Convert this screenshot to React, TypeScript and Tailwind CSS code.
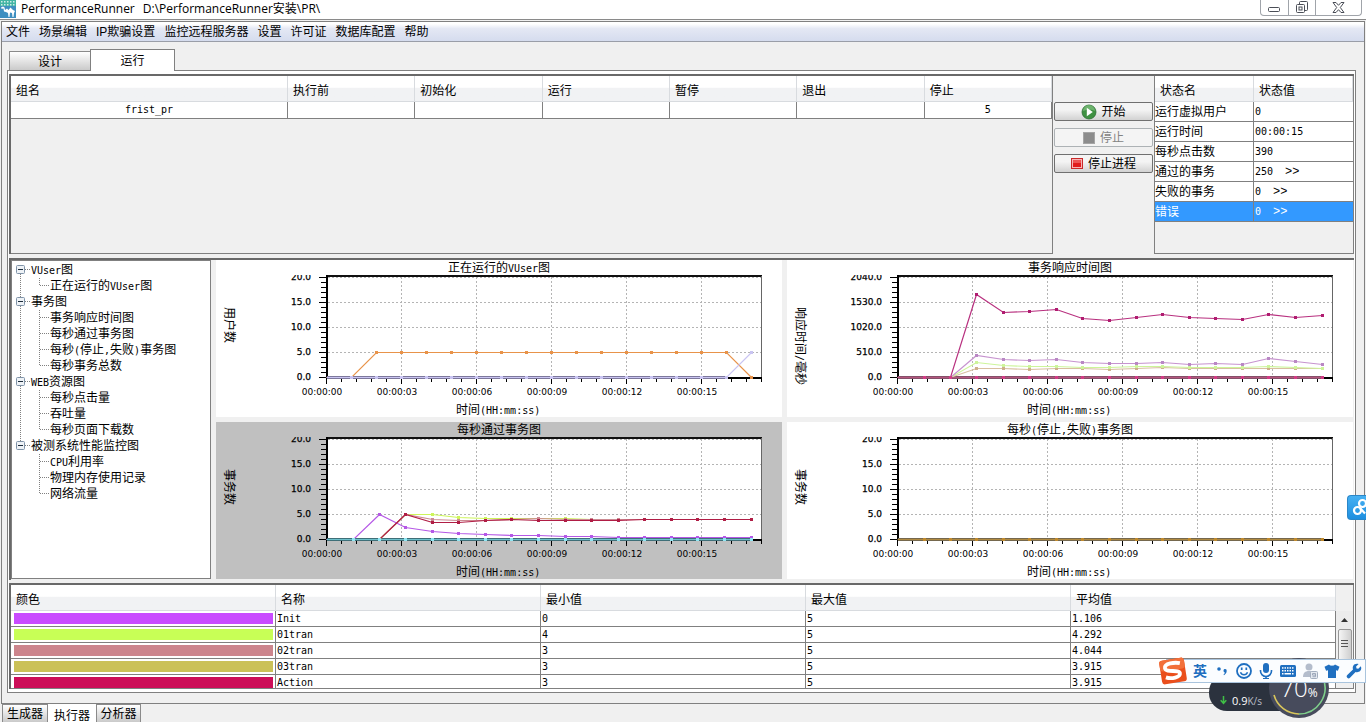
import React from "react";

const CJK = "font-['Liberation_Sans','Noto_Sans_CJK_SC',sans-serif]";

/* Latin runs inside Chinese labels are set in a narrow monospaced face. */
function splitRuns(text: string) {
  return text.split(/([\x20-\x7e]+)/).filter(Boolean);
}
const isLatin = (s: string) => /^[\x20-\x7e]+$/.test(s);

function Mixed({ text }: { text: string }) {
  return (
    <>
      {splitRuns(text).map((run, i) =>
        isLatin(run) ? (
          <span key={i} className="font-['DejaVu_Sans_Mono',monospace] text-[10px]">
            {run}
          </span>
        ) : (
          run
        ),
      )}
    </>
  );
}

function SvgMixed({ text }: { text: string }) {
  return (
    <>
      {splitRuns(text).map((run, i) =>
        isLatin(run) ? (
          <tspan key={i} className="font-['DejaVu_Sans_Mono',monospace] text-[10px]">
            {run}
          </tspan>
        ) : (
          <tspan key={i}>{run}</tspan>
        ),
      )}
    </>
  );
}

/* ---------- charts ---------- */

type Series = { color: string; dot?: string; xs: number[]; ys: number[] };

const ORIGIN_X = 110;
const ZERO_Y = 117;
const seconds = Array.from({ length: 18 }, (_, i) => ORIGIN_X + i * 25);
const samples = [
  110, 137, 163, 189, 216, 242, 269, 295, 322, 349, 375, 402, 428, 455, 481, 508, 535,
];
const flat = (n: number) => Array.from({ length: n }, () => ZERO_Y);

const userSeries: Series[] = [
  { color: "#e8934a", xs: seconds, ys: [117, 117, ...Array.from({ length: 15 }, () => 92), 117] },
  { color: "#c9c4f2", xs: seconds, ys: [...flat(17), 92] },
];
const responseSeries: Series[] = [
  { color: "#d8bfa0", dot: "#cdb08c", xs: samples, ys: [117, 117, 117, 108, 108, 109, 108, 108, 109, 108, 107, 108, 108, 108, 108, 108, 108] },
  { color: "#cdf59a", xs: samples, ys: [117, 117, 117, 102, 105, 106, 106, 107, 107, 106, 106, 107, 107, 107, 106, 107, 108] },
  { color: "#c793cf", dot: "#b987c4", xs: samples, ys: [117, 117, 117, 95, 99, 100, 99, 102, 103, 103, 102, 104, 103, 104, 98, 101, 104] },
  { color: "#b8307f", dot: "#b01c70", xs: samples, ys: [117, 117, 117, 34, 52, 51, 49, 58, 60, 57, 54, 57, 58, 59, 54, 57, 55] },
  { color: "#b5557d", dot: "#d23c86", xs: samples, ys: flat(17) },
];
const passedSeries: Series[] = [
  { color: "#cdf55a", xs: samples, ys: [117, 117, 117, 92, 92, 95, 96, 96, 96, 96, 97, 97, 97, 97, 97, 97, 97] },
  { color: "#cc8a92", xs: samples, ys: [117, 117, 117, 92, 97, 98, 98, 97, 96, 97, 97, 97, 97, 97, 97, 97, 97] },
  { color: "#b558e6", xs: samples, ys: [117, 117, 92, 105, 109, 111, 112, 113, 113, 114, 114, 115, 115, 115, 115, 115, 115] },
  { color: "#b01d45", xs: samples, ys: [117, 117, 117, 92, 100, 100, 98, 97, 98, 98, 98, 98, 97, 97, 97, 97, 97] },
  { color: "#6cc0cb", dot: "#8fe6f2", xs: samples, ys: flat(17) },
];
const failedSeries: Series[] = [
  { color: "#b08a40", dot: "#c08a2e", xs: samples, ys: flat(17) },
];

type ChartProps = {
  title: string;
  yTitle: string;
  yLabels: string[];
  series: Series[];
  baseline: { color: string; end: number };
  selected?: boolean;
  clipId: string;
};

function Chart({ title, yTitle, yLabels, series, baseline, selected, clipId }: ChartProps) {
  return (
    <section className={selected ? "bg-[#c0c0c0]" : "bg-white"}>
      <svg
        viewBox="0 0 566 157"
        preserveAspectRatio="xMinYMin meet"
        className="block h-[157px] w-full"
        role="img"
        aria-label={title}
      >
        <defs>
          <clipPath id={clipId}>
            <rect x="0" y="15" width="109" height="120" />
          </clipPath>
        </defs>
        <text x="283" y="12" textAnchor="middle" className={`${CJK} text-[12px]`}>
          <SvgMixed text={title} />
        </text>
        <text transform="translate(9 47) rotate(90)" className={`${CJK} text-[12px]`}>
          <SvgMixed text={yTitle} />
        </text>
        <rect x="110" y="16" width="435" height="101" fill="#fff" />
        <g stroke="#b4b4b4" strokeWidth="1" strokeDasharray="2 2">
          {[17, 42, 67, 92].map((y) => (
            <line key={y} x1="112" x2="545" y1={y + 0.5} y2={y + 0.5} />
          ))}
          {[185, 260, 335, 410, 485].map((x) => (
            <line key={x} x1={x + 0.5} x2={x + 0.5} y1="17" y2="117" />
          ))}
        </g>
        <rect x="110" y="15" width="436" height="2" fill="#111" />
        <rect x="545" y="16" width="1" height="102" fill="#666" />
        <rect x="110" y="117" width="436" height="2" fill="#000" />
        <rect x="110" y="15" width="2" height="104" fill="#000" />
        {Array.from({ length: 21 }, (_, i) => (
          <rect
            key={i}
            x={i % 5 === 0 ? 103 : 105}
            y={17 + i * 5}
            width={i % 5 === 0 ? 7 : 5}
            height="1"
          />
        ))}
        {Array.from({ length: 30 }, (_, i) => (
          <rect key={i} x={110 + i * 15} y="118" width="1" height={i % 5 === 0 ? 6 : 4} />
        ))}
        <g clipPath={`url(#${clipId})`} className="font-['DejaVu_Sans',sans-serif] text-[9px]" stroke="#000" strokeWidth="0.25">
          {yLabels.map((label, i) => (
            <text key={label} x="95" y={20 + i * 25} textAnchor="end">
              {label}
            </text>
          ))}
        </g>
        <g className="font-['DejaVu_Sans',sans-serif] text-[9px]">
          {["00", "03", "06", "09", "12", "15"].map((s, i) => (
            <text key={s} x={106 + i * 75} y="135" textAnchor="middle">
              {`00:00:${s}`}
            </text>
          ))}
        </g>
        <rect x="111" y="116" width={baseline.end - 111} height="3" fill={baseline.color} />
        {series.map((s, i) => (
          <g key={i}>
            <polyline
              fill="none"
              stroke={s.color}
              strokeWidth="1.2"
              points={s.xs.map((x, j) => `${x + 0.5},${s.ys[j] + 0.5}`).join(" ")}
            />
            {s.xs.slice(1).map((x, j) => (
              <rect key={j} x={x - 1} y={s.ys[j + 1] - 1} width="3" height="3" fill={s.dot ?? s.color} />
            ))}
          </g>
        ))}
        <text x="240" y="154" className={`${CJK} text-[12px]`}>
          <SvgMixed text="时间(HH:mm:ss)" />
        </text>
      </svg>
    </section>
  );
}

/* ---------- tree ---------- */

const tree = [
  { label: "VUser图", children: ["正在运行的VUser图"] },
  {
    label: "事务图",
    children: ["事务响应时间图", "每秒通过事务图", "每秒(停止,失败)事务图", "每秒事务总数"],
  },
  { label: "WEB资源图", children: ["每秒点击量", "吞吐量", "每秒页面下载数"] },
  { label: "被测系统性能监控图", children: ["CPU利用率", "物理内存使用记录", "网络流量"] },
];

function RootGuide({ first, last }: { first: boolean; last: boolean }) {
  return (
    <svg width="19" height="16" viewBox="0 0 19 16" className="block">
      <g stroke="#808080" strokeDasharray="1 1">
        {!first && <line x1="8.5" x2="8.5" y1="0" y2="4" />}
        {!last && <line x1="8.5" x2="8.5" y1="12" y2="16" />}
        <line x1="13" x2="18" y1="7.5" y2="7.5" />
      </g>
      <rect x="4.5" y="3.5" width="8" height="8" rx="1" fill="#eef2f6" stroke="#7f93a8" />
      <rect x="6" y="7" width="5" height="1" fill="#1b2b3b" />
    </svg>
  );
}

function LeafGuide({ last, rootLast }: { last: boolean; rootLast: boolean }) {
  return (
    <svg width="38" height="16" viewBox="0 0 38 16" className="block shrink-0">
      <g stroke="#808080" strokeDasharray="1 1">
        {!rootLast && <line x1="8.5" x2="8.5" y1="0" y2="16" />}
        <line x1="27.5" x2="27.5" y1="0" y2={last ? 8 : 16} />
        <line x1="28" x2="37" y1="7.5" y2="7.5" />
      </g>
    </svg>
  );
}

function GraphTree() {
  return (
    <ul className="h-[319px] w-[200px] shrink-0 border border-[#808080] bg-white pt-px leading-4 whitespace-nowrap">
      {tree.map((node, i) => {
        const rootLast = i === tree.length - 1;
        return (
          <li key={node.label}>
            <div className="flex h-4 items-center">
              <button type="button" aria-label={`折叠 ${node.label}`}>
                <RootGuide first={i === 0} last={rootLast} />
              </button>
              <span>
                <Mixed text={node.label} />
              </span>
            </div>
            <ul>
              {node.children.map((child, j) => (
                <li key={child} className="flex h-4 items-center">
                  <LeafGuide last={j === node.children.length - 1} rootLast={rootLast} />
                  <span>
                    <Mixed text={child} />
                  </span>
                </li>
              ))}
            </ul>
          </li>
        );
      })}
    </ul>
  );
}

/* ---------- tables ---------- */

const TH =
  "h-[26px] border-r border-b border-[#d8dbdf] bg-linear-to-b from-white from-45% to-[#f1f2f4] to-50% p-0 pt-1 pl-[5px] text-left font-normal leading-4";

function GroupTable() {
  const heads = ["组名", "执行前", "初始化", "运行", "暂停", "退出", "停止"];
  const row = ["frist_pr", "", "", "", "", "", "5"];
  return (
    <div className="min-w-0 flex-1 border-r border-b border-[#808080]">
      <table className="w-full table-fixed border-separate border-spacing-0">
        <colgroup>
          <col className="w-[277px]" />
          <col span={6} />
        </colgroup>
        <thead>
          <tr>
            {heads.map((h) => (
              <th key={h} scope="col" className={TH}>
                {h}
              </th>
            ))}
          </tr>
        </thead>
        <tbody>
          <tr>
            {row.map((c, i) => (
              <td
                key={i}
                className="h-4 border-r border-b border-[#808080] bg-white p-0 text-center font-['DejaVu_Sans_Mono',monospace] text-[10px] leading-4"
              >
                {c}
              </td>
            ))}
          </tr>
        </tbody>
      </table>
    </div>
  );
}

const statusRows = [
  { name: "运行虚拟用户", value: "0" },
  { name: "运行时间", value: "00:00:15" },
  { name: "每秒点击数", value: "390" },
  { name: "通过的事务", value: "250", more: true },
  { name: "失败的事务", value: "0", more: true },
  { name: "错误", value: "0", more: true, active: true },
];

function StatusTable() {
  return (
    <div className="w-[200px] shrink-0 border-r border-b border-l border-[#808080]">
      <table className="w-full table-fixed border-separate border-spacing-0">
        <thead>
          <tr>
            <th scope="col" className={TH}>状态名</th>
            <th scope="col" className={TH}>状态值</th>
          </tr>
        </thead>
        <tbody>
          {statusRows.map((r) => (
            <tr key={r.name} className={r.active ? "bg-[#3399ff] text-white" : "bg-white"}>
              <td className="h-5 border-r border-b border-[#808080] p-0 leading-4">{r.name}</td>
              <td className="h-5 border-b border-[#808080] p-0 pl-px leading-4">
                <span className="flex items-center gap-3">
                  <span className="font-['DejaVu_Sans_Mono',monospace] text-[10px]">{r.value}</span>
                  {r.more && (
                    <a href="#" aria-label={`${r.name}详情`} className="font-['Liberation_Mono',monospace] text-[12px]">
                      &gt;&gt;
                    </a>
                  )}
                </span>
              </td>
            </tr>
          ))}
        </tbody>
      </table>
    </div>
  );
}

const legendRows = [
  { color: "bg-[#c94bff]", cells: ["Init", "0", "5", "1.106"] },
  { color: "bg-[#c8ff56]", cells: ["01tran", "4", "5", "4.292"] },
  { color: "bg-[#cc858d]", cells: ["02tran", "3", "5", "4.044"] },
  { color: "bg-[#cbc158]", cells: ["03tran", "3", "5", "3.915"] },
  { color: "bg-[#cc0e58]", cells: ["Action", "3", "5", "3.915"] },
];

function LegendTable() {
  return (
    <div className="flex h-[104px] overflow-hidden border-r border-b border-[#808080]">
      <div className="min-w-0 flex-1">
        <table className="w-full table-fixed border-separate border-spacing-0 bg-white">
          <thead>
            <tr>
              {["颜色", "名称", "最小值", "最大值", "平均值"].map((h) => (
                <th key={h} scope="col" className={TH}>
                  {h}
                </th>
              ))}
            </tr>
          </thead>
          <tbody>
            {legendRows.map((r) => (
              <tr key={r.cells[0]}>
                <td className="h-4 border-r border-b border-[#808080] p-0 pr-0.5 pl-[3px]">
                  <div className={`h-[11px] ${r.color}`} />
                </td>
                {r.cells.map((c, i) => (
                  <td
                    key={i}
                    className="h-4 border-r border-b border-[#808080] p-0 pl-px font-['DejaVu_Sans_Mono',monospace] text-[10px] leading-[15px]"
                  >
                    {c}
                  </td>
                ))}
              </tr>
            ))}
          </tbody>
        </table>
      </div>
      <div className="flex w-[17px] shrink-0 flex-col items-center bg-[#f0f0f0] pt-[26px]">
        <button type="button" aria-label="向上滚动" className="flex h-[18px] w-full items-center justify-center bg-[#ececec]">
          <svg width="7" height="4" viewBox="0 0 7 4">
            <path d="M3.5 0 7 4H0z" fill="#333" />
          </svg>
        </button>
        <div className="flex h-[34px] w-[14px] flex-col items-center gap-[2px] rounded-xs border border-[#979797] bg-linear-to-r from-[#f5f5f5] to-[#cfcfcf] pt-[10px]">
          <i className="h-px w-[7px] bg-[#555]" />
          <i className="h-px w-[7px] bg-[#555]" />
          <i className="h-px w-[7px] bg-[#555]" />
        </div>
      </div>
    </div>
  );
}

/* ---------- run controls ---------- */

const BTN =
  "flex h-[19px] w-full items-center justify-center gap-1 rounded-xs border leading-4 whitespace-nowrap";

function RunButtons() {
  return (
    <div className="flex w-[101px] shrink-0 flex-col gap-[7px] px-px pt-[26px]">
      <button type="button" className={`${BTN} border-[#707070] bg-linear-to-b from-[#f4f4f4] from-40% to-[#d2d2d2]`}>
        <svg width="16" height="16" viewBox="0 0 16 16">
          <circle cx="8" cy="8" r="7" fill="#3f9142" stroke="#2c6f33" strokeWidth="0.8" />
          <path d="M2 7a6 6 0 0 1 12 0c-3-2-8-1.500-12 0z" fill="#8cc98a" opacity="0.6" />
          <path d="M5.800 3.800 11.800 8l-6 4.200z" fill="#fff" />
        </svg>
        开始
      </button>
      <button type="button" disabled className={`${BTN} border-[#adb2b5] bg-[#f4f4f4] text-[#838383]`}>
        <svg width="13" height="12" viewBox="0 0 13 12">
          <rect x="0.5" y="0.5" width="11" height="11" fill="#8c8c8c" stroke="#a5a5a5" />
        </svg>
        停止
      </button>
      <button type="button" className={`${BTN} border-[#707070] bg-linear-to-b from-[#f4f4f4] from-40% to-[#d2d2d2]`}>
        <svg width="13" height="12" viewBox="0 0 13 12">
          <rect x="0.5" y="0.5" width="11" height="10" fill="#f7b5b5" stroke="#c92a2a" />
          <rect x="2" y="2" width="8" height="7" fill="#e21b1b" />
          <rect x="2" y="2" width="8" height="3" fill="#ee5555" />
        </svg>
        停止进程
      </button>
    </div>
  );
}

/* ---------- chrome ---------- */

function TitleBar() {
  return (
    <header className="flex h-5 items-start border-b border-[#8a8a8a] bg-white">
      <svg width="16" height="18" viewBox="0 0 16 18" className="shrink-0">
        <rect width="16" height="18" fill="#3f8fc0" />
        <rect width="16" height="6" fill="#43b5a4" />
        <g fill="#fff" opacity="0.75">
          {[1, 4, 7, 10, 13].map((x) => (
            <rect key={x} x={x} y="1" width="1.500" height="1.500" />
          ))}
          {[1, 4, 7, 10, 13].map((x) => (
            <rect key={x} x={x} y="4" width="1.500" height="1.500" />
          ))}
        </g>
        <path
          d="M1 7.500 3 6.500 4.500 7.500 5 10 7 8.500 8.500 10 10.500 7.500 13 10 15 11 14 13 13.500 17 12.500 17 12 13 10 12.500 9.500 17 8.500 17 8 13 6 12 4 11.500 3.500 8.500 1.500 8.800z"
          fill="#fff"
        />
      </svg>
      <h1 className="flex flex-1 gap-2 pl-[5px] font-['Open_Sans','Noto_Sans_CJK_SC',sans-serif] text-[12px] leading-[18px] font-normal whitespace-nowrap">
        <span>PerformanceRunner</span>
        <span>{"D:\\PerformanceRunner安装\\PR\\"}</span>
      </h1>
      <div className="mr-1 flex h-4 overflow-hidden rounded-b border border-t-0 border-[#a0a4aa] bg-white">
        <button type="button" aria-label="最小化" className="flex w-[27px] items-center justify-center">
          <svg width="13" height="14" viewBox="0 0 13 14">
            <rect x="0.5" y="6.500" width="11" height="4" rx="1" fill="#fff" stroke="#4a4e57" />
          </svg>
        </button>
        <button type="button" aria-label="还原" className="flex w-[27px] items-center justify-center border-l border-[#a0a4aa]">
          <svg width="13" height="14" viewBox="0 0 13 14" fill="#fff" stroke="#4a4e57">
            <rect x="3.500" y="0.5" width="8" height="9" rx="1" />
            <rect x="0.5" y="3.500" width="8" height="8" rx="1" />
            <rect x="3" y="6" width="3" height="3" />
          </svg>
        </button>
        <button type="button" aria-label="关闭" className="flex w-[46px] items-center justify-center border-l border-[#a0a4aa]">
          <svg width="13" height="13" viewBox="0 0 13 13">
            <path
              d="M1 1.500h3l2.500 2.800L9 1.500h3L8.300 6.500l3.700 5H9L6.500 8.700 4 11.500H1l3.700-5z"
              fill="#fff"
              stroke="#4a4e57"
            />
          </svg>
        </button>
      </div>
    </header>
  );
}

function MenuBar() {
  const items = ["文件", "场景编辑", "IP欺骗设置", "监控远程服务器", "设置", "许可证", "数据库配置", "帮助"];
  return (
    <nav className="flex h-5 items-center gap-[9px] border-b border-[#9a9ea8] bg-linear-to-b from-white from-10% via-[#e4e8f4] via-35% to-[#d5dcee] pl-1 leading-[18px]">
      {items.map((m) => (
        <button key={m} type="button" className="whitespace-nowrap">
          {m}
        </button>
      ))}
    </nav>
  );
}

/* ---------- floating desktop widgets ---------- */

const SLOT = "flex w-[22px] items-center justify-center";

function InputMethodBar() {
  return (
    <div className="absolute top-[659px] right-0 flex h-6 items-stretch border border-[#a9c4dd] bg-[#fbfdff] pl-[22px] text-[#1f6fc0]">
      <svg width="30" height="30" viewBox="0 0 30 30" className="absolute -top-1 -left-[9px]">
        <g transform="rotate(-9 15 15)">
          <rect x="2.500" y="3" width="25" height="24" rx="3" fill="#ea4f1c" />
          <rect x="2.500" y="3" width="25" height="11" rx="3" fill="#f2703a" />
          <path
            d="M23 8.300C18 6.500 7.500 6 7.500 11c0 5 14 3 14 7.200 0 4.500-9.500 4.600-14.500 2"
            fill="none"
            stroke="#fff"
            strokeWidth="3.800"
          />
        </g>
      </svg>
      <span className={`${SLOT} text-[14px] font-bold`}>英</span>
      <span className={SLOT}>
        <svg width="14" height="14" viewBox="0 0 14 14" fill="currentColor">
          <circle cx="4" cy="5" r="1.800" />
          <path d="M8.500 6.500a1.600 1.600 0 0 1 3.200.3c0 2-1 3.500-2.700 4.400l-.5-.8c.9-.6 1.300-1.200 1.300-2-.8 0-1.400-.8-1.300-1.900z" />
        </svg>
      </span>
      <span className={SLOT}>
        <svg width="18" height="18" viewBox="0 0 18 18" fill="none" stroke="currentColor">
          <circle cx="9" cy="9" r="7" strokeWidth="1.800" />
          <path d="M5.500 10.200a3.700 3.700 0 0 0 7 0" strokeWidth="1.500" />
          <path d="M6.700 5.500v2.500M11.300 5.500v2.500" strokeWidth="1.700" />
        </svg>
      </span>
      <span className={SLOT}>
        <svg width="16" height="18" viewBox="0 0 16 18" fill="currentColor">
          <rect x="5" y="1" width="6" height="10" rx="3" />
          <path d="M2.500 8v1a5.500 5.500 0 0 0 11 0V8" fill="none" stroke="currentColor" strokeWidth="1.600" />
          <path d="M7.200 14h1.600v2H11v1H5v-1h2.200z" />
        </svg>
      </span>
      <span className={SLOT}>
        <svg width="18" height="14" viewBox="0 0 18 14">
          <rect x="1" y="1" width="16" height="12" rx="1.500" fill="currentColor" />
          <g fill="#fff">
            {[3, 5.5, 8, 10.5, 13].map((x) => (
              <rect key={x} x={x} y="3.200" width="1.500" height="1.500" />
            ))}
            {[3, 5.5, 8, 10.5, 13].map((x) => (
              <rect key={x} x={x} y="6" width="1.500" height="1.500" />
            ))}
            <rect x="3" y="9" width="1.500" height="1.500" />
            <rect x="5.500" y="9" width="6.500" height="1.500" />
            <rect x="13" y="9" width="1.500" height="1.500" />
          </g>
        </svg>
      </span>
      <span className={SLOT}>
        <svg width="18" height="18" viewBox="0 0 18 18">
          <circle cx="8" cy="5" r="3.500" fill="#b4bdcc" />
          <path d="M2 15c0-4 2-6 6-6s5 2 5 6z" fill="#b4bdcc" />
          <rect x="9.500" y="9.500" width="7" height="7" rx="1" fill="#e4e9f0" stroke="#a3aebf" />
          <path d="M11.500 11.500h3v3.200h-3M11.500 11.500v1.600h3" fill="none" stroke="#8d99ad" strokeWidth="0.8" />
        </svg>
      </span>
      <span className={SLOT}>
        <svg width="16" height="16" viewBox="0 0 16 16" fill="currentColor">
          <path d="M5 1.500c1 1.600 5 1.600 6 0l4.500 2.300-1.600 4-1.900-.6V15H4V7.200l-1.900.6-1.600-4z" />
        </svg>
      </span>
      <span className={SLOT}>
        <svg width="16" height="16" viewBox="0 0 16 16" fill="currentColor">
          <path d="M14.800 3.300 12.300 5.800 10.500 5.400 10.100 3.600 12.600 1.100C10.500.4 8.300 1 7.300 2.800 6.600 4 6.600 5.200 7 6.400L1.300 12a1.900 1.900 0 0 0 2.700 2.700L9.600 9c1.600.6 3.400.2 4.500-.9 1.300-1.300 1.500-3.200.7-4.800z" />
        </svg>
      </span>
    </div>
  );
}

function SpeedBall() {
  return (
    <div className="absolute top-[658px] right-[37px] h-[62px] w-[120px] text-white">
      <div className="absolute top-[16px] left-0 flex h-[37px] w-[100px] items-end rounded-[18px] bg-[#2b323e] pb-[2px] pl-[11px]">
        <svg width="7" height="9" viewBox="0 0 7 9" className="mb-[4px]">
          <path d="M3.500 0v7M0.7 4.300 3.500 7.300 6.300 4.300" fill="none" stroke="#3fbf46" strokeWidth="1.500" />
        </svg>
        <span className="pl-[5px] font-['Open_Sans',sans-serif] text-[11px] leading-4">0.9</span>
        <span className="font-['Open_Sans',sans-serif] text-[10px] leading-4 text-[#b9bec8]">K/s</span>
      </div>
      <div className="absolute top-0 right-0 flex h-[60px] w-[60px] items-center justify-center rounded-full bg-[#474b5c]">
        <svg width="60" height="60" viewBox="0 0 60 60" className="absolute inset-0">
          <path d="M5 37a26 26 0 0 0 25 19" fill="none" stroke="#d9c65b" strokeWidth="1.600" />
          <path d="M30 56a26 26 0 0 0 24-36" fill="none" stroke="#7fcf8b" strokeWidth="1.600" />
        </svg>
        <span className="relative pt-1 font-['Open_Sans',sans-serif] text-[24px] leading-6 font-light">
          70<span className="text-[12px] font-normal">%</span>
        </span>
      </div>
    </div>
  );
}

function SideBadge() {
  return (
    <button
      type="button"
      aria-label="分享"
      className="absolute top-[495px] right-0 h-[25px] w-[19px] overflow-hidden rounded-l-sm border border-r-0 border-[#2a86c8] bg-linear-to-b from-[#45b0f2] to-[#1d8fe0]"
    >
      <svg width="18" height="23" viewBox="0 0 18 23" fill="none" stroke="#fff" strokeWidth="2.200">
        <circle cx="9.500" cy="14.500" r="3.500" />
        <circle cx="14.500" cy="7.500" r="3.500" />
        <path d="M12 12l5 5.500" />
      </svg>
    </button>
  );
}

/* ---------- page ---------- */

const TAB_OFF = "border border-b-0 border-[#8a8a8a] bg-linear-to-b from-white to-[#cacaca]";

export default function App() {
  const twenty = ["20.0", "15.0", "10.0", "5.0", "0.0"];
  return (
    <div className={`relative min-h-screen overflow-hidden bg-[#f0f0f0] text-[12px] text-black ${CJK}`}>
      <TitleBar />
      <div className="mx-px mt-px border border-[#808080]">
        <MenuBar />
        <main className="pt-[7px] pr-2 pb-[10px] pl-[5px]">
          <div role="tablist" className="flex h-[21px] items-end pl-0.5 leading-4">
            <button type="button" role="tab" aria-selected="false" className={`h-[19px] w-[81px] border-r-0 pt-0.5 ${TAB_OFF}`}>
              设计
            </button>
            <button
              type="button"
              role="tab"
              aria-selected="true"
              className="z-10 -mb-px h-[22px] w-[85px] border border-b-0 border-[#808080] bg-white"
            >
              运行
            </button>
          </div>
          <div className="border border-[#808080] bg-white px-px py-[3px]">
            <div className="bg-[#f0f0f0]">
              <section className="flex h-[180px] border-t-2 border-l-2 border-[#696969]">
                <GroupTable />
                <RunButtons />
                <StatusTable />
              </section>
              <section className="mt-1 flex gap-[5px] border-t-2 border-l-2 border-[#696969] pr-px pb-px">
                <GraphTree />
                <div className="grid min-w-0 flex-1 grid-cols-2 gap-[5px]">
                  <Chart
                    clipId="clip-users"
                    title="正在运行的VUser图"
                    yTitle="用户数"
                    yLabels={twenty}
                    series={userSeries}
                    baseline={{ color: "#7d789c", end: 510 }}
                  />
                  <Chart
                    clipId="clip-response"
                    title="事务响应时间图"
                    yTitle="响应时间/毫秒"
                    yLabels={["2040.0", "1530.0", "1020.0", "510.0", "0.0"]}
                    series={responseSeries}
                    baseline={{ color: "#85506a", end: 537 }}
                  />
                  <Chart
                    clipId="clip-passed"
                    title="每秒通过事务图"
                    yTitle="事务数"
                    yLabels={twenty}
                    series={passedSeries}
                    baseline={{ color: "#3f6f78", end: 537 }}
                    selected
                  />
                  <Chart
                    clipId="clip-failed"
                    title="每秒(停止,失败)事务图"
                    yTitle="事务数"
                    yLabels={twenty}
                    series={failedSeries}
                    baseline={{ color: "#75684e", end: 537 }}
                  />
                </div>
              </section>
              <section className="mt-[3px] border-t-2 border-l-2 border-[#696969]">
                <LegendTable />
              </section>
            </div>
          </div>
        </main>
      </div>
      <div role="tablist" className="flex h-[18px] pl-0.5 leading-[18px]">
        <button type="button" role="tab" aria-selected="false" className={`w-[46px] ${TAB_OFF}`}>
          生成器
        </button>
        <button type="button" role="tab" aria-selected="true" className="w-[48px] bg-white pt-[3px]">
          执行器
        </button>
        <button type="button" role="tab" aria-selected="false" className={`w-[45px] ${TAB_OFF}`}>
          分析器
        </button>
      </div>
      <SideBadge />
      <SpeedBall />
      <InputMethodBar />
    </div>
  );
}
